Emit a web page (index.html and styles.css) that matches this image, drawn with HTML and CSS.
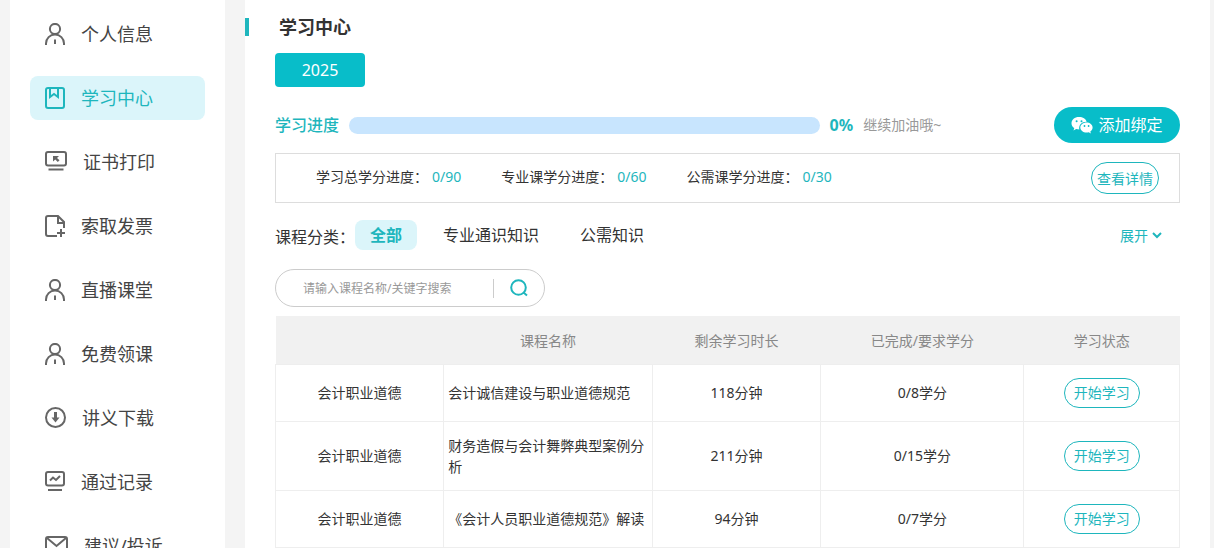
FILE: index.html
```html
<!DOCTYPE html>
<html lang="zh-CN">
<head>
<meta charset="utf-8">
<meta name="viewport" content="width=device-width, initial-scale=1">
<title>学习中心</title>
<link rel="stylesheet" href="styles.css">
</head>
<body>
<svg class="sprite" aria-hidden="true">
  <symbol id="user" viewBox="0 0 20 22"><circle cx="10" cy="6" r="5.1"/><path d="M1 22v-1.500a9 9 0 0 1 18 0V22M10 16.500v4.500"/></symbol>
</svg>
<div class="page">
  <nav class="sidebar">
    <a class="nav-item" href="#"><svg class="icon" width="20" height="22"><use href="#user"/></svg>个人信息</a>
    <a class="nav-item active" href="#"><svg class="icon" width="20" height="22" viewBox="0 0 20 22"><rect x="1" y="1" width="18" height="20" rx="2"/><path d="M5 1v9l4-3 4 3V1"/></svg>学习中心</a>
    <a class="nav-item" href="#"><svg class="icon" width="22" height="22" viewBox="0 0 22 22"><rect x="1" y="1" width="20" height="13.500" rx="2"/><path d="M3.500 18.500h15"/><path class="solid" d="M8 5h6l-2 2 2.500 2.300-1.700 1.600L10.300 8.500 8 10.500z"/></svg>证书打印</a>
    <a class="nav-item" href="#"><svg class="icon" width="20" height="22" viewBox="0 0 20 22"><path d="M12 21H3a2 2 0 0 1-2-2V3a2 2 0 0 1 2-2h10l6 6v6M13 1v7h6M16 14v8M12 18h8"/></svg>索取发票</a>
    <a class="nav-item" href="#"><svg class="icon" width="20" height="22"><use href="#user"/></svg>直播课堂</a>
    <a class="nav-item" href="#"><svg class="icon" width="20" height="22"><use href="#user"/></svg>免费领课</a>
    <a class="nav-item" href="#"><svg class="icon" width="21" height="22" viewBox="0 0 21 22"><circle cx="10.500" cy="10.500" r="9.500"/><path class="thick" d="M10.500 5v7"/><path class="solid" d="M6.500 10.500h8l-4 5z"/></svg>讲义下载</a>
    <a class="nav-item" href="#"><svg class="icon" width="20" height="22" viewBox="0 0 20 22"><rect x="1" y="1" width="18" height="13.500" rx="2"/><path d="M3 19h14M5 9.500l3-3 3 2.500 4-4"/></svg>通过记录</a>
    <a class="nav-item" href="#"><svg class="icon" width="23" height="22" viewBox="0 0 23 22"><rect x="1" y="2" width="21" height="17" rx="2"/><path d="M2 3l9.500 8L21 3"/></svg>建议/投诉</a>
  </nav>
  <main class="main">
    <h1 class="title">学习中心</h1>
    <div class="content">
      <button class="year" type="button">2025</button>
      <div class="progress-row">
        <span class="progress-label" id="progress-label">学习进度</span>
        <div class="track" role="progressbar" aria-labelledby="progress-label" aria-valuenow="0" aria-valuemin="0" aria-valuemax="100"></div>
        <strong class="percent">0%</strong>
        <span class="cheer">继续加油哦~</span>
        <button class="bind" type="button"><svg width="22" height="18" viewBox="0 0 22 18"><path fill="#fff" d="M8 1C3.600 1 .5 3.700.5 7.200c0 2 1 3.700 2.800 4.900l-.8 2.300 2.700-1.400c1 .3 2 .4 3.100.4C7.500 9 10.700 5.600 15.700 5.700 14.900 2.800 11.900 1 8 1z"/><path fill="#fff" d="M21.600 11.400c0-2.900-2.800-5-6.100-5s-6.200 2.200-6.200 5 2.800 5.100 6.200 5.100c.8 0 1.500-.1 2.200-.3l2.200 1.200-.6-2c1.400-1 2.300-2.400 2.300-4z"/><g fill="#08bdc9"><circle cx="5.600" cy="5.200" r="1"/><circle cx="10.500" cy="5.200" r="1"/><circle cx="13.500" cy="10" r=".9"/><circle cx="17.600" cy="10" r=".9"/></g></svg>添加绑定</button>
      </div>
      <section class="stats">
        <span class="stat">学习总学分进度：<span class="value">0/90</span></span>
        <span class="stat">专业课学分进度：<span class="value">0/60</span></span>
        <span class="stat">公需课学分进度：<span class="value">0/30</span></span>
        <button class="outline details" type="button">查看详情</button>
      </section>
      <div class="filters">
        <span class="filter-label">课程分类：</span>
        <div class="tabs">
          <button class="tab selected" type="button">全部</button>
          <button class="tab" type="button">专业通识知识</button>
          <button class="tab" type="button">公需知识</button>
        </div>
        <button class="expand" type="button">展开<svg width="10" height="8" viewBox="0 0 10 8"><path d="M1 2l4 4 4-4"/></svg></button>
      </div>
      <form class="search">
        <input class="search-input" type="text" aria-label="搜索课程" placeholder="请输入课程名称/关键字搜索">
        <button class="search-button" type="button" aria-label="搜索"><svg width="18" height="18" viewBox="0 0 18 18"><circle cx="8.500" cy="8.500" r="7.300"/><path d="M13.500 13.500l3.500 3"/></svg></button>
      </form>
      <table class="courses">
        <colgroup><col class="col-type"><col class="col-name"><col class="col-time"><col class="col-credit"><col class="col-state"></colgroup>
        <thead><tr><th></th><th>课程名称</th><th>剩余学习时长</th><th>已完成/要求学分</th><th>学习状态</th></tr></thead>
        <tbody>
          <tr><td>会计职业道德</td><td class="name">会计诚信建设与职业道德规范</td><td>118分钟</td><td>0/8学分</td><td><button class="outline start" type="button">开始学习</button></td></tr>
          <tr><td>会计职业道德</td><td class="name">财务造假与会计舞弊典型案例分析</td><td>211分钟</td><td>0/15学分</td><td><button class="outline start" type="button">开始学习</button></td></tr>
          <tr><td>会计职业道德</td><td class="name">《会计人员职业道德规范》解读</td><td>94分钟</td><td>0/7学分</td><td><button class="outline start" type="button">开始学习</button></td></tr>
        </tbody>
      </table>
    </div>
  </main>
</div>
</body>
</html>
```
FILE: styles.css
```css
* { box-sizing: border-box; }
body {
  margin: 0;
  background: #f4f4f4;
  color: #333;
  font: 14px/21px "Noto Sans", "Noto Sans CJK SC", sans-serif;
}
button, input { font: inherit; color: inherit; }
button { border: 0; padding: 0; background: none; cursor: pointer; white-space: nowrap; }
.sprite { position: absolute; width: 0; height: 0; }
.page {
  display: flex;
  gap: 20px;
  height: 100vh;
  padding: 0 4px 0 10px;
  overflow: hidden;
}
.sidebar {
  display: flex;
  flex-direction: column;
  flex: none;
  gap: 20px;
  width: 215px;
  padding: 12px 20px;
  background: #fff;
}
.nav-item {
  display: flex;
  flex: none;
  align-items: center;
  gap: 16px;
  height: 44px;
  padding-left: 15px;
  border-radius: 8px;
  color: #444;
  font-size: 18px;
  text-decoration: none;
}
.nav-item.active { background: #dbf5fa; color: #1eb6bd; }
.icon { fill: none; stroke: #666; stroke-width: 2; }
.active .icon { stroke: #1eb6bd; }
.icon .solid { fill: #666; stroke: none; }
.icon .thick { stroke-width: 3; }
.main { flex: 1; min-width: 0; padding-top: 18px; background: #fff; }
.title {
  margin: 0;
  padding-left: 30px;
  border-left: 4px solid #1eb6bd;
  font-size: 18px;
  line-height: 18px;
}
.content { padding: 17px 30px 0; }
.year {
  display: block;
  width: 90px;
  height: 34px;
  border-radius: 4px;
  background: #08bdc9;
  color: #fff;
  font-size: 16px;
}
.progress-row {
  display: flex;
  align-items: center;
  gap: 10px;
  margin-top: 20px;
}
.progress-label { color: #1eb6bd; font-size: 16px; font-weight: 500; }
.track { width: 52%; height: 17px; border-radius: 9px; background: #c8e5fe; }
.percent { color: #1eb6bd; font-size: 16px; }
.cheer { padding-bottom: 2px; color: #999; }
.bind {
  display: flex;
  align-items: center;
  justify-content: center;
  gap: 5px;
  width: 126px;
  height: 36px;
  margin-left: auto;
  border-radius: 18px;
  background: #08bdc9;
  color: #fff;
  font-size: 16px;
}
.stats {
  display: flex;
  align-items: center;
  gap: 40px;
  height: 50px;
  margin-top: 10px;
  padding: 0 20px 0 40px;
  border: 1px solid #ddd;
}
.stat { display: flex; gap: 4px; padding-bottom: 4px; }
.value { color: #1eb6bd; }
.outline { border: 1px solid #1eb6bd; color: #1eb6bd; }
.details { width: 68px; height: 32px; margin-left: auto; border-radius: 16px; }
.filters { display: flex; align-items: center; height: 30px; margin-top: 17px; font-size: 16px; }
.filter-label { padding-top: 4px; }
.tabs { display: flex; gap: 11px; }
.tab { height: 30px; padding: 0 15px; border-radius: 8px; }
.tab.selected { background: #dbf5fa; color: #1eb6bd; font-weight: 700; }
.expand {
  display: flex;
  align-items: center;
  gap: 4px;
  margin-left: auto;
  padding-right: 18px;
  color: #1eb6bd;
  font-size: 14px;
}
.expand svg { fill: none; stroke: #1eb6bd; stroke-width: 2; }
.search {
  display: flex;
  align-items: center;
  width: 270px;
  height: 38px;
  margin-top: 19px;
  border: 1px solid #ccc;
  border-radius: 19px;
}
.search-input {
  flex: 1;
  min-width: 0;
  height: 36px;
  padding: 0 0 0 27px;
  border: 0;
  outline: 0;
  background: none;
  font-size: 12px;
}
.search-input::placeholder { color: #999; }
.search-button {
  display: flex;
  align-items: center;
  justify-content: center;
  width: 51px;
  height: 19px;
  border-left: 1px solid #ccc;
}
.search-button svg { fill: none; stroke: #1eb6bd; stroke-width: 2; }
.courses {
  width: 100%;
  margin-top: 9px;
  border-collapse: collapse;
  table-layout: fixed;
  text-align: center;
}
.col-type, .col-time { width: 18.6%; }
.col-name { width: 23.1%; }
.col-credit { width: 22.5%; }
.col-state { width: 17.2%; }
.courses th { height: 48px; padding: 2px 0 0; background: #f1f1f1; color: #888; font-weight: 400; }
.courses td { height: 57px; padding: 13px 4px; border: 1px solid #eee; }
.courses .name { text-align: left; }
.start { width: 76px; height: 30px; border-radius: 15px; }
```
